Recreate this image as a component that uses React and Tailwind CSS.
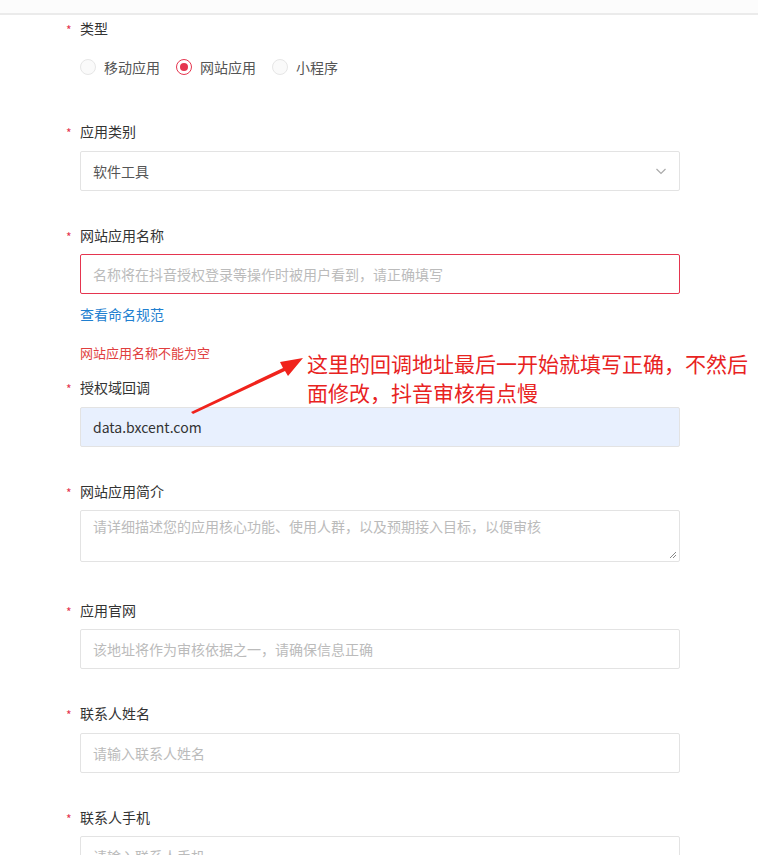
import React from "react";

const font = { fontFamily: '"Microsoft YaHei", "Noto Sans CJK SC", "Noto Sans", sans-serif' };

const Label = ({ children }) => (
  <div className="relative flex h-5 items-center text-[14px] text-[#333]">
    <span className="absolute -left-[14px] top-[6px] text-[12px] leading-none text-[#e5354f]">*</span>
    {children}
  </div>
);

const Input = ({ placeholder, value, error, filled }) => (
  <div
    className={`flex h-10 w-[600px] items-center rounded-[2px] border px-3 text-[14px] ${
      error ? "border-[#e5354f]" : "border-[#e3e3e3]"
    } ${filled ? "bg-[#e8f0fe] text-[#333]" : "bg-white text-[#bbb]"}`}
  >
    {value || placeholder}
  </div>
);

const Radio = ({ checked, children }) => (
  <div className="flex items-center gap-2">
    <span
      className={`flex h-4 w-4 items-center justify-center rounded-full border ${
        checked ? "border-[#e5354f]" : "border-[#e6e6e6] bg-[#fafafa]"
      }`}
    >
      {checked && <span className="h-2 w-2 rounded-full bg-[#e5354f]" />}
    </span>
    <span className="text-[14px] text-[#555]">{children}</span>
  </div>
);

export default function App() {
  return (
    <div className="relative min-h-[855px] w-[758px] overflow-hidden bg-white" style={font}>
      <div className="h-[13px] bg-[#fcfcfc]" />
      <div className="h-[2px] bg-[#ebebeb]" />

      <div className="pl-[80px] pt-[3px]">
        {/* 类型 */}
        <Label>类型</Label>
        <div className="mt-[10px] flex h-[38px] items-center gap-[16px]">
          <Radio>移动应用</Radio>
          <Radio checked>网站应用</Radio>
          <Radio>小程序</Radio>
        </div>

        {/* 应用类别 */}
        <div className="mt-[35px]">
          <Label>应用类别</Label>
          <div className="mt-[10px] flex h-10 w-[600px] items-center justify-between rounded-[2px] border border-[#e3e3e3] px-3 text-[14px] text-[#555]">
            软件工具
            <svg width="12" height="12" viewBox="0 0 12 12" fill="none">
              <path d="M1.5 4l4.5 4.5L10.5 4" stroke="#aaa" strokeWidth="1.2" />
            </svg>
          </div>
        </div>

        {/* 网站应用名称 */}
        <div className="mt-[34px]">
          <Label>网站应用名称</Label>
          <div className="mt-[9px]">
            <Input error placeholder="名称将在抖音授权登录等操作时被用户看到，请正确填写" />
          </div>
          <div className="mt-[10px] flex h-5 items-center text-[14px] text-[#1f7fd0]">查看命名规范</div>
          <div className="mt-[19px] flex h-5 items-center text-[13px] text-[#e03e3e]">网站应用名称不能为空</div>
        </div>

        {/* 授权域回调 */}
        <div className="mt-[14px]">
          <Label>授权域回调</Label>
          <div className="mt-[10px]">
            <Input filled value="data.bxcent.com" />
          </div>
        </div>

        {/* 网站应用简介 */}
        <div className="mt-[34px]">
          <Label>网站应用简介</Label>
          <div className="relative mt-[9px] h-[52px] w-[600px] rounded-[2px] border border-[#e3e3e3] px-3 pt-[5px] text-[14px] text-[#bbb]">
            请详细描述您的应用核心功能、使用人群，以及预期接入目标，以便审核
            <svg className="absolute bottom-[2px] right-[2px]" width="8" height="8" viewBox="0 0 8 8">
              <path d="M7 1L1 7M7 4L4 7" stroke="#888" strokeWidth="1" />
            </svg>
          </div>
        </div>

        {/* 应用官网 */}
        <div className="mt-[38px]">
          <Label>应用官网</Label>
          <div className="mt-[9px]">
            <Input placeholder="该地址将作为审核依据之一，请确保信息正确" />
          </div>
        </div>

        {/* 联系人姓名 */}
        <div className="mt-[34px]">
          <Label>联系人姓名</Label>
          <div className="mt-[10px]">
            <Input placeholder="请输入联系人姓名" />
          </div>
        </div>

        {/* 联系人手机 */}
        <div className="mt-[34px]">
          <Label>联系人手机</Label>
          <div className="mt-[9px]">
            <Input placeholder="请输入联系人手机" />
          </div>
        </div>
      </div>

      {/* annotation */}
      <div className="absolute left-[307px] top-[349px] text-[21px] leading-[29px] text-[#e8231f]">
        <div>这里的回调地址最后一开始就填写正确，不然后</div>
        <div>面修改，抖音审核有点慢</div>
      </div>
      <svg className="absolute left-0 top-0" width="758" height="855" viewBox="0 0 758 855" fill="none">
        <path d="M191 412 L283 368 L280 362 L303 358 L288 376 L285 371 L193 414 Z" fill="#f0231c" />
      </svg>
    </div>
  );
}
